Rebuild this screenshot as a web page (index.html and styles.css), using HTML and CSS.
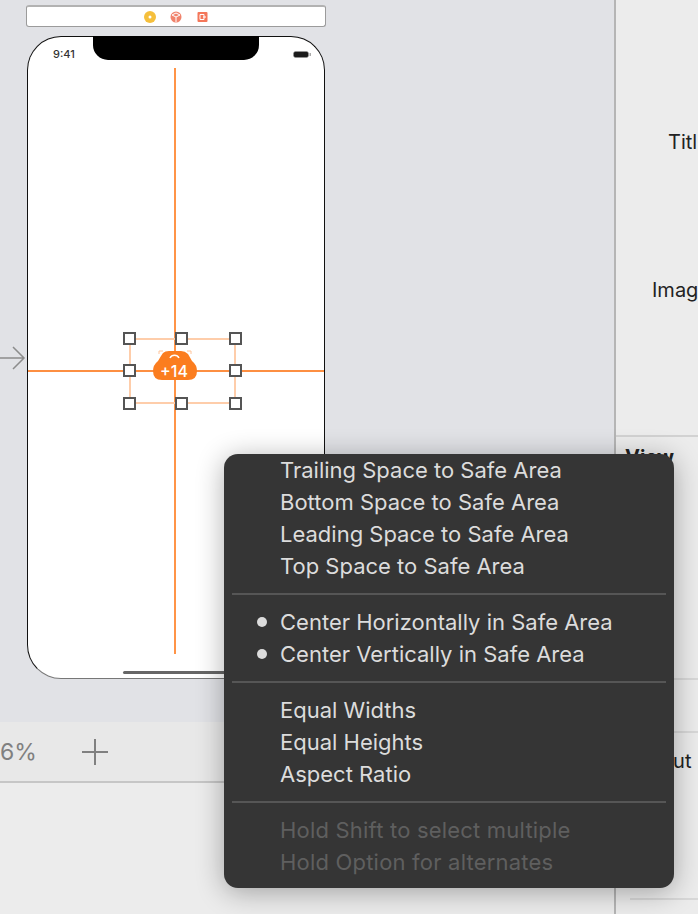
FILE: index.html
```html
<!DOCTYPE html>
<html>
<head>
    <title>Storyboard constraints</title>
    <link rel="stylesheet" href="styles.css">
</head>
<body>
    <div class="window">
        <!-- Left side: canvas and zoom bar -->
        <div class="editor">
            <div class="canvas">
                <div class="sceneBar">
                    <svg width="66" height="14" viewBox="0 0 66 14">
                        <circle cx="7" cy="7" r="6" fill="#f5bf3c"/>
                        <circle cx="7" cy="7" r="1.5" fill="#fff"/>
                        <circle cx="33" cy="7" r="5.5" fill="#f0836c"/>
                        <path d="M29 5l4-2 4 2-4 2zM33 7v5" stroke="#fff" stroke-width="1" fill="none"/>
                        <rect x="54.500" y="2" width="10" height="10" rx="1" fill="#f4775a"/>
                        <path d="M57 4.500h4v5h-4zM60 7h3" stroke="#fff" stroke-width="1" fill="none"/>
                    </svg>
                </div>
                <div class="phoneRow">
                    <svg class="entryArrow" width="27" height="26" viewBox="0 0 27 26">
                        <path d="M0 13h24M13 2l11 11-11 11" stroke="#8c8c8c" stroke-width="1.500" fill="none"/>
                    </svg>
                    <div class="phone">
                        <div class="notch"></div>
                        <div class="statusBar">
                            <span class="clock">9:41</span>
                            <svg width="18" height="7" viewBox="0 0 18 7">
                                <rect x="0.500" y="0.500" width="15" height="6" rx="2" fill="#1c1c1c" stroke="#999" stroke-width="0.500"/>
                                <rect x="16.500" y="2" width="1.500" height="3" fill="#aaa"/>
                            </svg>
                        </div>
                        <div class="guide guideV"></div>
                        <div class="guide guideH"></div>
                        <div class="selection">
                            <span class="handle tl"></span>
                            <span class="handle tc"></span>
                            <span class="handle tr"></span>
                            <span class="handle ml"></span>
                            <span class="handle mr"></span>
                            <span class="handle bl"></span>
                            <span class="handle bc"></span>
                            <span class="handle br"></span>
                        </div>
                        <div class="badge">
                            <svg width="44" height="32" viewBox="0 0 44 32">
                                <path d="M6 5V2h4M34 2h4v3" stroke="#ffc49a" stroke-width="1" fill="none"/>
                                <path d="M10 4Q12 2 16 2H28Q32 2 35 5L39 12Q44 16 44 22Q44 31 35 31H9Q0 31 0 22Q0 16 5 12L8 7z" fill="#fb7d1f"/>
                                <path d="M17 9a5 5 0 0 1 9 0" stroke="#fff" stroke-width="1.500" fill="none"/>
                            </svg>
                            <span class="badgeText">+14</span>
                        </div>
                        <div class="homeBar"></div>
                    </div>
                </div>
            </div>
            <div class="zoomBar">
                <span class="zoomValue">6%</span>
                <svg width="26" height="26" viewBox="0 0 26 26">
                    <path d="M0 13h26M13 0v26" stroke="#808080" stroke-width="2"/>
                </svg>
            </div>
        </div>

        <!-- Right side: inspector, labels run to the window edge -->
        <div class="inspector">
            <div class="inspectorTop">
                <div class="fieldLabel titleLabel">Titl</div>
                <div class="fieldLabel imageLabel">Imag</div>
            </div>
            <div class="inspectorView">
                <div class="viewHead">View</div>
            </div>
            <div class="inspectorLayout"></div>
            <div class="inspectorBottom">
                <div class="fieldLabel layoutLabel">Layout</div>
            </div>
        </div>

        <!-- Context menu -->
        <div class="menu">
            <div class="menuItem"><span class="mark"></span>Trailing Space to Safe Area</div>
            <div class="menuItem"><span class="mark"></span>Bottom Space to Safe Area</div>
            <div class="menuItem"><span class="mark"></span>Leading Space to Safe Area</div>
            <div class="menuItem"><span class="mark"></span>Top Space to Safe Area</div>
            <div class="menuSep"></div>
            <div class="menuItem"><span class="mark checked"></span>Center Horizontally in Safe Area</div>
            <div class="menuItem"><span class="mark checked"></span>Center Vertically in Safe Area</div>
            <div class="menuSep"></div>
            <div class="menuItem"><span class="mark"></span>Equal Widths</div>
            <div class="menuItem"><span class="mark"></span>Equal Heights</div>
            <div class="menuItem"><span class="mark"></span>Aspect Ratio</div>
            <div class="menuSep"></div>
            <div class="menuItem disabled"><span class="mark"></span>Hold Shift to select multiple</div>
            <div class="menuItem disabled"><span class="mark"></span>Hold Option for alternates</div>
        </div>
    </div>
</body>
</html>
```

FILE: styles.css
```css
html, body {
    margin: 0;
    padding: 0;
}

body {
    font-family: Inter, "Liberation Sans", sans-serif;
    overflow: hidden;
}

.window {
    position: relative;
    width: 698px;
    height: 914px;
    display: flex;
    overflow: hidden;
    background-color: #ececec;
}

/* Editor */
.editor {
    width: 614px;
    flex: none;
}

.canvas {
    height: 722px;
    padding-top: 5px;
    box-sizing: border-box;
    background-color: #e1e2e6;
}

.sceneBar {
    width: 300px;
    height: 22px;
    margin-left: 26px;
    box-sizing: border-box;
    display: flex;
    align-items: center;
    justify-content: center;
    background-color: #fff;
    border: 1px solid #9b9b9b;
    border-top: 2px solid #b2b2b2;
    border-radius: 3px;
}

.phoneRow {
    display: flex;
    margin-top: 9px;
}

.entryArrow {
    flex: none;
    margin-top: 309px;
}

.phone {
    position: relative;
    width: 298px;
    height: 643px;
    box-sizing: border-box;
    background-color: #fff;
    border: 1px solid #111;
    border-bottom-color: #777;
    border-radius: 34px;
}

.notch {
    width: 166px;
    height: 24px;
    margin: -1px auto 0;
    background-color: #000;
    border-radius: 0 0 15px 15px;
}

.statusBar {
    position: absolute;
    top: 10px;
    left: 25px;
    right: 13px;
    display: flex;
    justify-content: space-between;
    align-items: center;
}

.clock {
    font-size: 11px;
    font-weight: 500;
    color: #333;
}

/* Overlays on the device */
.guide {
    position: absolute;
    background-color: #ff9447;
}

.guideV {
    left: 146px;
    top: 31px;
    width: 2px;
    height: 586px;
}

.guideH {
    left: 0;
    right: 0;
    top: 333px;
    height: 2px;
    background-color: #fd8f42;
}

.selection {
    position: absolute;
    left: 101px;
    top: 301px;
    width: 107px;
    height: 66px;
    box-sizing: border-box;
    border: 2px solid #fecdaa;
}

.handle {
    position: absolute;
    width: 13px;
    height: 13px;
    box-sizing: border-box;
    background-color: #fff;
    border: 2px solid #555;
}

.tl, .tc, .tr { top: -8px; }
.ml, .mr { top: 24px; }
.bl, .bc, .br { bottom: -8px; }
.tl, .ml, .bl { left: -8px; }
.tc, .bc { left: 44px; }
.tr, .mr, .br { right: -8px; }

.badge {
    position: absolute;
    left: 125px;
    top: 312px;
    width: 44px;
    height: 32px;
}

.badgeText {
    position: absolute;
    left: 0;
    right: 2px;
    top: 13px;
    text-align: center;
    font-size: 16px;
    line-height: 18px;
    font-weight: 500;
    color: #fff;
}

.homeBar {
    position: absolute;
    left: 95px;
    bottom: 4px;
    width: 110px;
    height: 3px;
    background-color: #666;
    border-radius: 2px;
}

/* Zoom bar */
.zoomBar {
    height: 59px;
    display: flex;
    align-items: center;
    gap: 45px;
    background-color: #e8e8e8;
    border-bottom: 2px solid #c6c6c6;
}

.zoomValue {
    font-size: 23px;
    color: #808080;
}

/* Inspector */
.inspector {
    flex: 1;
    min-width: 0;
    box-sizing: border-box;
    border-left: 2px solid #b5b5b5;
    overflow: hidden;
}

.inspectorTop {
    height: 437px;
    box-sizing: border-box;
    border-bottom: 2px solid #d2d2d2;
}

.fieldLabel {
    white-space: nowrap;
    font-size: 20px;
    line-height: 24px;
    color: #222;
}

.titleLabel {
    padding: 130px 0 0 52px;
}

.imageLabel {
    padding: 124px 0 0 36px;
}

.inspectorView {
    height: 243px;
    box-sizing: border-box;
    border-bottom: 2px solid #d8d8d8;
}

.viewHead {
    padding: 8px 0 0 9px;
    font-size: 20px;
    line-height: 24px;
    font-weight: 700;
    color: #222;
}

.inspectorLayout {
    height: 53px;
    box-sizing: border-box;
    border-bottom: 2px solid #d8d8d8;
}

.layoutLabel {
    padding-top: 16px;
    margin-left: -2px;
}

.inspectorBottom {
    height: 167px;
    margin-left: 14px;
    box-sizing: border-box;
    border-bottom: 2px solid #d8d8d8;
}

/* Context menu */
.menu {
    position: absolute;
    left: 224px;
    top: 454px;
    width: 450px;
    height: 434px;
    box-sizing: border-box;
    background-color: #353535;
    border-radius: 14px;
    box-shadow: 0 4px 28px rgba(0, 0, 0, 0.32);
}

.menuItem {
    display: flex;
    align-items: center;
    height: 32px;
    font-size: 22px;
    color: #dcdcdc;
    white-space: nowrap;
}

.menuItem.disabled {
    color: #5f5f5f;
    letter-spacing: 0.2px;
}

.mark {
    flex: none;
    width: 56px;
    box-sizing: border-box;
    padding-left: 33px;
}

.mark.checked::before {
    content: "";
    display: block;
    width: 10px;
    height: 10px;
    background-color: #dcdcdc;
    border-radius: 50%;
}

.menuSep {
    height: 2px;
    margin: 11px 8px;
    background-color: #565656;
}
```
